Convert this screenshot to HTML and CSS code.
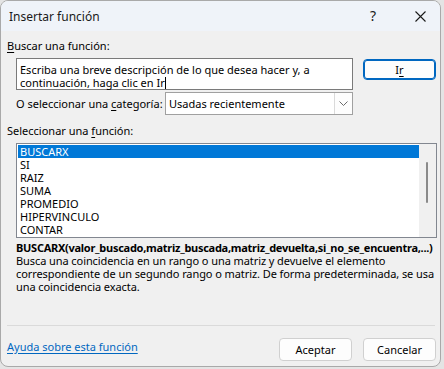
FILE: index.html
```html
<!DOCTYPE html>
<html lang="es">
<head>
<meta charset="utf-8">
<title>Insertar función</title>
<link rel="stylesheet" href="styles.css">
</head>
<body>
<div class="win">
  <div class="titlebar">
    <span class="title">Insertar función</span>
    <span class="help">?</span>
    <span class="close">
      <svg width="11" height="11" viewBox="0 0 11 11"><path d="M0.5 0.5 L10.5 10.5 M10.5 0.5 L0.5 10.5" stroke="#1a1a1a" stroke-width="1.1" fill="none"/></svg>
    </span>
  </div>
  <div class="content">
    <div class="label"><u>B</u>uscar una función:</div>
    <div class="search-row">
      <div class="textbox">Escriba una breve descripción de lo que desea hacer y, a continuación, haga clic en Ir<span class="caret"></span></div>
      <div class="btn btn-default">I<u>r</u></div>
    </div>
    <div class="cat-row">
      <span class="cat-label">O seleccionar una <u>c</u>ategoría:</span>
      <div class="select">
        <span class="select-text">Usadas recientemente</span>
        <span class="select-arrow">
          <svg width="9" height="5" viewBox="0 0 9 5"><path d="M0.5 0.5 L4.5 4.5 L8.5 0.5" stroke="#6b6b6b" stroke-width="1" fill="none"/></svg>
        </span>
      </div>
    </div>
    <div class="label label-list">Seleccionar una <u>f</u>unción:</div>
    <div class="listbox">
      <ul class="items">
        <li class="sel">BUSCARX</li>
        <li>SI</li>
        <li>RAIZ</li>
        <li>SUMA</li>
        <li>PROMEDIO</li>
        <li>HIPERVINCULO</li>
        <li>CONTAR</li>
      </ul>
      <div class="scrollbar"><div class="thumb"></div></div>
    </div>
    <div class="syntax">BUSCARX(valor_buscado,matriz_buscada,matriz_devuelta,si_no_se_encuentra,...)</div>
    <div class="desc">Busca una coincidencia en un rango o una matriz y devuelve el elemento correspondiente de un segundo rango o matriz. De forma predeterminada, se usa una coincidencia exacta.</div>
    <div class="sep"></div>
    <div class="footer">
      <a class="link" href="#">Ayuda sobre esta función</a>
      <div class="buttons">
        <div class="btn">Aceptar</div>
        <div class="btn">Cancelar</div>
      </div>
    </div>
  </div>
</div>
</body>
</html>
```
FILE: styles.css
```css
html, body {
  margin: 0;
  padding: 0;
  background: #e4e4e4;
}
body {
  width: 444px;
  height: 369px;
  overflow: hidden;
  font-family: "Noto Sans", "Open Sans", sans-serif;
  font-size: 11px;
  line-height: 13px;
  color: #000;
}
u { text-decoration: underline; text-underline-offset: 2px; }

.win {
  width: 439px;
  height: 365px;
  border: 1px solid #a9a9a9;
  border-radius: 8px;
  background: #f0f0f0;
  overflow: hidden;
}
.titlebar {
  height: 30px;
  background: #eff3f9;
  display: flex;
  align-items: center;
  position: relative;
}
.title {
  margin-left: 8px;
  font-size: 12px;
  color: #1a1a1a;
  margin-top: 1px;
}
.help {
  position: absolute;
  left: 369px;
  top: 7px;
  font-size: 14px;
  line-height: 16px;
  color: #1a1a1a;
}
.close {
  position: absolute;
  left: 414px;
  top: 10px;
  width: 11px;
  height: 11px;
  display: block;
}
.close svg { display: block; }

.content {
  padding: 8px 4px 0 6px;
}
.label { height: 13px; }
.search-row {
  display: flex;
  align-items: flex-start;
  margin: 6px 0 0 9px;
}
.textbox {
  width: 329px;
  height: 26px;
  border: 1px solid #7a7a7a;
  background: #fff;
  padding: 4px 3px 0 3px;
}
.caret {
  display: inline-block;
  width: 1px;
  height: 12px;
  background: #000;
  vertical-align: -2px;
}
.btn {
  box-sizing: border-box;
  width: 73px;
  height: 22px;
  border: 1px solid #d0d0d0;
  border-radius: 4px;
  background: #fdfdfd;
  display: flex;
  align-items: center;
  justify-content: center;
  color: #000;
}
.btn-default {
  margin: 1px 0 0 10px;
  height: 21px;
  border: 1px solid #0067c0;
  box-shadow: inset 0 0 0 1px #0067c0;
}
.cat-row {
  display: flex;
  align-items: center;
  margin: 2px 0 0 9px;
}
.cat-label { width: 149px; }
.select {
  box-sizing: border-box;
  width: 188px;
  height: 23px;
  border: 1px solid #a0a0a0;
  background: #fff;
  display: flex;
  align-items: center;
  justify-content: space-between;
}
.select-text { padding-left: 3px; }
.select-arrow {
  box-sizing: border-box;
  width: 18px;
  height: 21px;
  border-left: 1px solid #dadada;
  background: #fdfdfd;
  display: flex;
  align-items: center;
  justify-content: center;
}
.select-arrow svg { display: block; }
.label-list { margin-top: 9px; }
.listbox {
  box-sizing: border-box;
  margin: 6px 0 0 9px;
  width: 421px;
  height: 95px;
  border: 1px solid #828790;
  background: #fff;
  padding: 1px;
  display: flex;
}
.items {
  list-style: none;
  margin: 0;
  padding: 0;
  flex: 1;
}
.items li {
  height: 13px;
  padding-left: 2px;
  white-space: nowrap;
}
.items li.sel {
  background: #0078d7;
  color: #fff;
}
.scrollbar {
  width: 17px;
  margin: -1px -1px -1px 0;
  background: #f0f0f0;
  position: relative;
}
.thumb {
  position: absolute;
  left: 7px;
  top: 18px;
  width: 2px;
  height: 41px;
  background: #8a8a8a;
  border-radius: 1px;
}
.syntax {
  margin: 3px 0 0 9px;
  font-weight: bold;
  letter-spacing: -0.27px;
  white-space: nowrap;
}
.desc {
  margin-left: 9px;
  width: 424px;
  letter-spacing: -0.08px;
}
.sep {
  margin-top: 32px;
  height: 1px;
  background: #dadada;
  width: 428px;
}
.footer {
  display: flex;
  align-items: center;
  justify-content: space-between;
  margin-top: 12px;
}
.link {
  color: #0067c0;
  text-decoration: underline;
  text-underline-offset: 2px;
  margin-top: -7px;
}
.buttons {
  display: flex;
  gap: 11px;
  margin-right: 0;
}
.buttons .btn { height: 23px; }
```
